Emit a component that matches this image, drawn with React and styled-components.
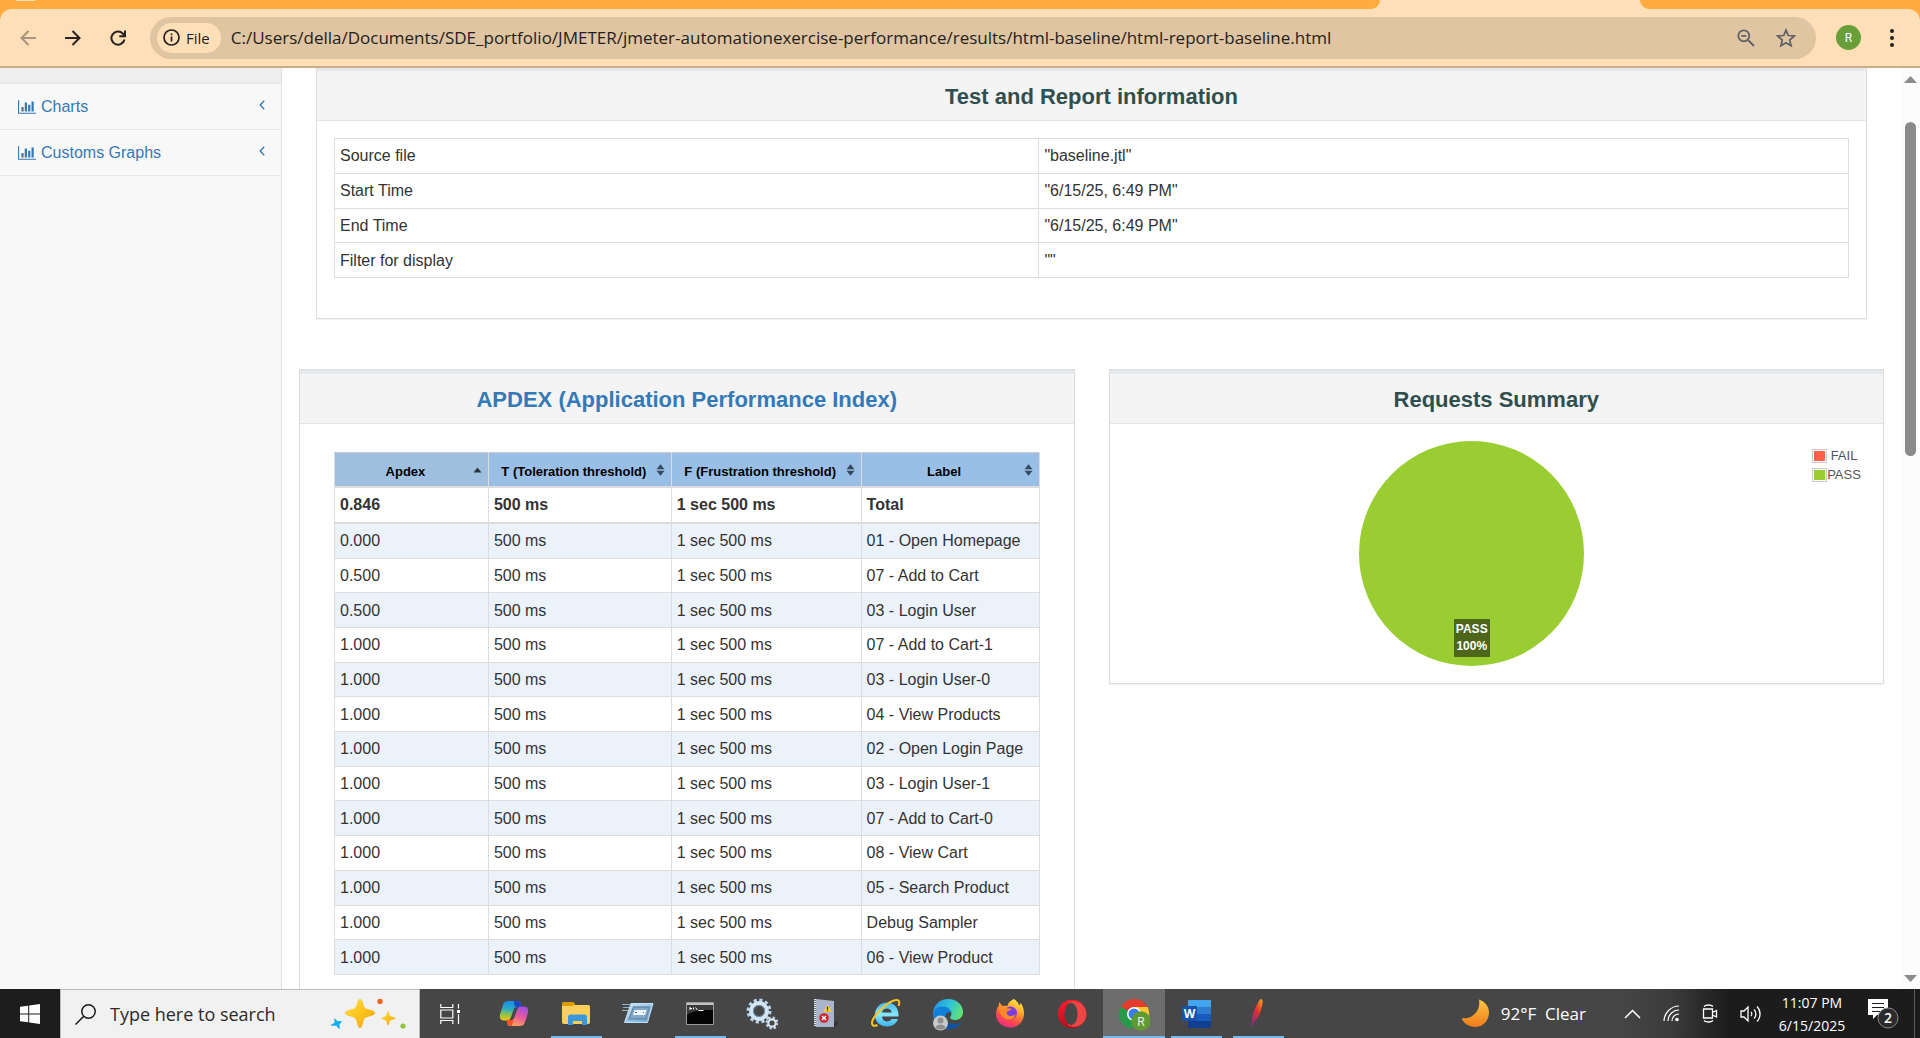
import React from "react";
import styled, { createGlobalStyle } from "styled-components";

const UI = '"Open Sans", "Noto Sans", sans-serif';
const PAGE = '"Liberation Sans", Arial, sans-serif';

const GlobalStyle = createGlobalStyle`
  *, *::before, *::after { box-sizing: border-box; }
  body { margin: 0; font-family: ${PAGE}; font-size: 16px; color: #333; background: #fff; overflow: hidden; }
  button, input { font: inherit; color: inherit; border: 0; background: none; padding: 0; margin: 0; }
  svg { display: block; flex: none; }
  a { color: #337ab7; text-decoration: none; }
  h1, h2, p, ul { margin: 0; padding: 0; }
`;

const Desktop = styled.div`
  height: 100vh;
  display: flex;
  flex-direction: column;
`;

/* ---------- browser frame ---------- */

const Browser = styled.header`
  flex: none;
  background: #ffab40;
  border-bottom: 2px solid #c9ae8a;
`;

const TabStrip = styled.div`
  height: 9px;
  display: flex;
  background: #ffdfb8;
`;

const TabGap = styled.div`
  background: #ffab40;
  flex: ${(p) => p.$grow} 1 0;
  border-radius: ${(p) => (p.$side === "left" ? "0 0 12px 0" : "0 0 0 12px")};
`;

const TabSearch = styled.div`
  width: 19px;
  height: 1px;
  margin-left: 16px;
  background: #ffdfb8;
`;

const ActiveTab = styled.div`
  flex: 260 1 0;
`;

const Toolbar = styled.div`
  height: 57px;
  display: flex;
  align-items: center;
  padding: 0 16px 0 5px;
  background: #ffdfb8;
  border-radius: 12px 12px 0 0;
`;

const ToolButton = styled.button`
  width: 45px;
  height: 42px;
  display: grid;
  place-items: center;
  color: ${(p) => (p.$dim ? "#a8957d" : "#262320")};
`;

const AddressBar = styled.div`
  flex: 1;
  height: 42px;
  display: flex;
  align-items: center;
  margin: 0 12px 0 10px;
  padding: 0 10px 0 7px;
  border-radius: 21px;
  background: #dfc5a2;
`;

const SiteChip = styled.button`
  height: 30px;
  display: flex;
  align-items: center;
  gap: 6px;
  padding: 0 11px 0 6px;
  margin-right: 10px;
  border-radius: 15px;
  background: #ffdfb8;
  font: 500 15px ${UI};
  color: #24211d;
`;

const UrlInput = styled.input`
  flex: 1;
  min-width: 0;
  font: 17px ${UI};
  color: #24211d;
  outline: 0;
`;

const BarButton = styled.button`
  width: 40px;
  height: 36px;
  display: grid;
  place-items: center;
  color: #5f6065;
`;

const Avatar = styled.button`
  width: 25px;
  height: 25px;
  margin: 0 11px 0 8px;
  border-radius: 50%;
  background: #689f38;
  color: #fff;
  font: 12px Roboto, sans-serif;
`;

const MenuButton = styled.button`
  width: 40px;
  height: 36px;
  margin-right: -8px;
  display: grid;
  place-items: center;
`;

/* ---------- report page ---------- */

const Viewport = styled.div`
  flex: 1;
  min-height: 0;
  display: flex;
  overflow: hidden;
`;

const Sidebar = styled.nav`
  width: 282px;
  flex: none;
  padding-top: 15px;
  background: linear-gradient(#eee 15px, #f8f8f8 15px);
  border-right: 1px solid #e0e0e0;
`;

const MenuList = styled.ul`
  list-style: none;
  border-top: 1px solid #e7e7e7;
`;

const MenuLink = styled.a`
  height: 46px;
  display: flex;
  align-items: center;
  gap: 5px;
  padding: 0 16px 0 18px;
  border-bottom: 1px solid #e7e7e7;
`;

const MenuLabel = styled.span`
  flex: 1;
`;

const Main = styled.main`
  flex: 1;
  min-width: 0;
  padding: 0 17px;
  margin-top: -2px;
`;

const Columns = styled.div`
  display: grid;
  grid-template-columns: 1fr 1fr;
  gap: 34px;
  align-items: start;
`;

const Panel = styled.section`
  border: 1px solid #ddd;
  box-shadow: 0 1px 1px rgba(0, 0, 0, 0.05);
  background: #fff;
`;

const TopPanel = styled(Panel)`
  margin: 0 17px 50px;
`;

const PanelHeading = styled.div`
  height: 54px;
  display: flex;
  align-items: center;
  justify-content: center;
  padding-top: 2px;
  border-top: 4px solid #e6e9ec;
  border-bottom: 1px solid #e4e6e6;
  background: #f4f4f4;
`;

const PanelTitle = styled.h2`
  font-size: 22px;
  line-height: 24px;
  font-weight: 700;
  color: #2f4f4f;
`;

const InfoBody = styled.div`
  padding: 17px 17px 40px;
`;

const ApdexBody = styled.div`
  padding: 28px 34px 34px;
`;

const Table = styled.table`
  width: 100%;
  height: ${(p) => p.$height}px;
  table-layout: fixed;
  border-collapse: collapse;
  font-size: 16px;
  line-height: 22px;
`;

const Col = styled.col`
  width: calc(100% * ${(p) => p.$share} / 705);
`;

const Cell = styled.td`
  padding: 5px 5px 4px;
  border: 1px solid #ddd;
  font-weight: ${(p) => (p.$bold ? 700 : 400)};
`;

const Row = styled.tr`
  background: ${(p) => (p.$striped ? "#ebf2fa" : "#fff")};
`;

const TotalRow = styled.tr`
  td { border-top: 2px solid #ddd; border-bottom: 2px solid #ddd; }
`;

const HeadCell = styled.th`
  padding: 0;
  border: 1px solid #ddd;
  border-top-color: #ccc;
  border-bottom: 2px solid #ddd;
  background: ${(p) => (p.$sorted ? "#9fbfdf" : "#99bfe6")};
`;

const SortButton = styled.button`
  width: 100%;
  height: 33px;
  display: flex;
  align-items: center;
  padding: 0 6px 0 3px;
  font: 700 13px ${PAGE};
  color: #000;
`;

const SortLabel = styled.span`
  flex: 1;
  padding-top: 4px;
  text-align: center;
  white-space: nowrap;
`;

const SummaryBody = styled.div`
  display: flex;
  align-items: flex-start;
  padding: 17px 22px;
`;

const PieArea = styled.div`
  flex: 1;
  display: flex;
  justify-content: center;
`;

const Pie = styled.div`
  width: 225px;
  height: 225px;
  display: flex;
  align-items: flex-end;
  justify-content: center;
  padding-bottom: 9px;
  border-radius: 50%;
  background: #9acd32;
`;

const PieLabel = styled.p`
  padding: 2px;
  background: rgba(0, 0, 0, 0.5);
  color: #fff;
  font-size: 12px;
  line-height: 17px;
  font-weight: 700;
  text-align: center;
`;

const Legend = styled.ul`
  width: 49px;
  padding-top: 5px;
  list-style: none;
  font-size: 13px;
  line-height: 19px;
  color: #545454;
`;

const LegendItem = styled.li`
  display: flex;
  align-items: center;
`;

const Swatch = styled.span`
  width: 15px;
  height: 14px;
  flex: none;
  padding: 1px;
  border: 1px solid #ccc;
  background: ${(p) => p.$color} content-box;
`;

const LegendText = styled.span`
  flex: 1;
  text-align: center;
`;

const ScrollTrack = styled.div`
  width: 19px;
  flex: none;
  display: flex;
  flex-direction: column;
  align-items: center;
  padding: 8px 0 7px;
  background: #fcfcfc;
`;

const ScrollThumb = styled.div`
  width: 11px;
  height: 334px;
  margin: 39px 0 auto;
  border-radius: 6px;
  background: #8b8b8b;
`;

/* ---------- taskbar ---------- */

const Taskbar = styled.footer`
  height: 49px;
  flex: none;
  display: flex;
  background: linear-gradient(90deg, #464646 84%, #3c3c3c 87%, #1c1c1c 90%);
  color: #fff;
  font-family: ${UI};
`;

const StartButton = styled.button`
  width: 60px;
  display: grid;
  place-items: center;
  background: #1d1d1d;
`;

const SearchBox = styled.label`
  width: 360px;
  display: flex;
  align-items: center;
  padding: 0 11px 0 14px;
  border: 1px solid #bcbcbc;
  border-bottom: 0;
  background: #f1f1f1;
  color: #1b1b1b;
`;

const SearchInput = styled.input`
  flex: 1;
  min-width: 0;
  margin-left: 14px;
  font: 18px ${UI};
  outline: 0;
  &::placeholder { color: #2b2b2b; opacity: 1; }
`;

const TaskView = styled.button`
  width: 63px;
  padding-left: 20px;
`;

const AppButton = styled.button`
  width: 62px;
  display: flex;
  flex-direction: column;
  align-items: center;
  padding-top: 8px;
  background: ${(p) => (p.$active ? "#6d6d6d" : "transparent")};
  &::after {
    content: "";
    width: ${(p) => (p.$active ? 62 : 51)}px;
    height: 2px;
    margin-top: auto;
    background: ${(p) => (p.$running ? "#76b9ed" : "transparent")};
  }
`;

const Tray = styled.div`
  margin-left: auto;
  display: flex;
  align-items: center;
  font-size: 17px;
`;

const Weather = styled.button`
  display: flex;
  align-items: center;
  gap: 11px;
  margin-right: 38px;
  white-space: pre;
`;

const TrayIcons = styled.div`
  display: flex;
  align-items: center;
  gap: 22px;
`;

const TrayButton = styled.button`
  display: grid;
  place-items: center;
`;

const Clock = styled.button`
  width: 72px;
  margin: 0 20px 0 14px;
  font-size: 14px;
  line-height: 23px;
  white-space: nowrap;
`;

const ShowDesktop = styled.button`
  width: 6px;
  height: 49px;
  margin-left: 15px;
  border-left: 1px solid #5c5c5c;
`;

/* ---------- drawings ---------- */

const Stroke = ({ w = 22, h = w, box = `0 0 ${w} ${h}`, sw = 2, children }) => (
  <svg width={w} height={h} viewBox={box} fill="none" stroke="currentColor" strokeWidth={sw}>
    {children}
  </svg>
);

const BarChart = () => (
  <svg width="18" height="16" viewBox="0 0 2048 1792" fill="#337ab7">
    <path d="M640 896v512H384V896zM1024 384v1024H768V384zM2048 1536v128H0V128h128v1408zM1408 640v768h-256V640zM1792 256v1152h-256V256z" />
  </svg>
);

const AngleLeft = () => (
  <svg width="6" height="14" viewBox="0 0 6 14" fill="none" stroke="#337ab7" strokeWidth="1.4">
    <path d="M5.200.8 1.200 5l4 4.200" />
  </svg>
);

const SortIcon = ({ sorted }) => (
  <svg width="9" height="12" viewBox="0 0 9 12">
    {sorted ? (
      <path d="M.5 8.500 4.500 3.500l4 5z" fill="#26343f" />
    ) : (
      <>
        <path d="M.5 5.200 4.500.2l4 5z" fill="#33485c" />
        <path d="M.5 6.700h8l-4 5z" fill="#33485c" />
      </>
    )}
  </svg>
);

const Windows = () => (
  <svg width="20" height="20" viewBox="0 0 20 20" fill="#fff">
    <path d="M0 2.800 8.200 1.700v7.800H0zM9.200 1.500 20 0v9.500H9.200zM0 10.500h8.200v7.800L0 17.200zM9.200 10.500H20V20L9.200 18.500z" />
  </svg>
);

const Sparkles = () => (
  <svg width="78" height="34" viewBox="0 0 78 34">
    <defs>
      <linearGradient id="gold" x1="0" y1="0" x2="1" y2="1">
        <stop offset="0" stopColor="#ffe04a" />
        <stop offset=".5" stopColor="#fcc41c" />
        <stop offset="1" stopColor="#f0a11c" />
      </linearGradient>
    </defs>
    <path d="M30 2c2 0 2.500 2 3.500 6 .8 2.600 1.600 3.200 4 4 4.500 1.300 7.500 2 7.500 4s-3 2.700-7.500 4c-2.400.8-3.200 1.400-4 4-1 4-1.500 7-3.500 7s-2.500-3-3.500-7c-.8-2.600-1.600-3.200-4-4-4.500-1.300-7.500-2-7.500-4s3-2.700 7.500-4c2.400-.8 3.200-1.400 4-4 1-4 1.500-6 3.500-6z" fill="url(#gold)" />
    <path d="M58 14c1 0 1.300 4.200 2.200 5 .8.900 5.300 1 5.300 2.200s-4.500 1.300-5.300 2.200c-.9.900-1.200 5-2.200 5s-1.300-4.100-2.200-5c-.8-.9-4.300-1-4.300-2.200s3.500-1.300 4.300-2.200c.9-.8 1.200-5 2.200-5z" fill="url(#gold)" />
    <path d="M4.500 21.500c.8-.2 2.500 2.500 3.500 2.700s3-.7 3.500.2-1.800 2.200-2 3 1 4-.2 4.400-2.200-2.800-3.300-3-4.700.5-5-.6 3-1.500 3.500-2.400-.8-4 0-4.300z" fill="#13b1f3" />
    <circle cx="50" cy="4.500" r="2.700" fill="#f26522" />
    <circle cx="73" cy="29" r="2.600" fill="#8cc63e" />
  </svg>
);

const TaskViewIcon = () => (
  <Stroke w={21} h={20} sw={1.2}>
    <path d="M.8 0v3.500h12V0M.8 20v-3.500h12V20M.8 6h12v8h-12zM18.500 0v4.500M18.500 10v10" />
    <path d="M17 6h3v3h-3z" fill="#fff" stroke="none" />
  </Stroke>
);

const App32 = ({ children }) => (
  <svg width="32" height="34" viewBox="0 0 32 34">{children}</svg>
);

const Copilot = () => (
  <App32>
    <defs>
      <linearGradient id="cpA" x1=".4" y1="0" x2=".3" y2="1">
        <stop offset="0" stopColor="#1b8ce8" />
        <stop offset=".4" stopColor="#2aa9c8" />
        <stop offset=".7" stopColor="#8cc44a" />
        <stop offset="1" stopColor="#f5c518" />
      </linearGradient>
      <linearGradient id="cpB" x1=".7" y1="0" x2=".3" y2="1">
        <stop offset="0" stopColor="#a04ee0" />
        <stop offset=".5" stopColor="#ea5a9c" />
        <stop offset="1" stopColor="#ffa45a" />
      </linearGradient>
    </defs>
    <path d="M10 4h10c2 0 2.500 1.500 3 4l.5 2h-4.500c-2 0-3 1-3.700 3.500L13 20c-.8 2.500-2 3.500-4.500 3.500H6c-4 0-5-3-3.500-8L5 8c1-3 2.500-4 5-4z" fill="url(#cpA)" />
    <path d="M14 4h6c2 0 2.500 1.500 3 4l.5 2H19c-2 0-3-.8-3-6z" fill="#1a48c9" />
    <path d="M22 29H12c-2 0-2.500-1.500-3-4l-.5-2H13c2 0 3-1 3.700-3.500L19 13c.8-2.500 2-3.500 4.500-3.500H26c4 0 5 3 3.500 8L27 25c-1 3-2.500 4-5 4z" fill="url(#cpB)" />
    <path d="M8.500 23H13c1.500 0 2.500-.5 3.200-1.800L14 28.500c-.5.500-1.500.5-2 .5-2 0-2.500-1.500-3-4z" fill="#f4512c" />
  </App32>
);

const Folder = () => (
  <App32>
    <path d="M2 7c0-1 .6-2 2-2h9l2 3h13c1 0 2 .6 2 2v15c0 1.500-.8 2-2 2H4c-1.400 0-2-.7-2-2z" fill="#fbcf5b" />
    <path d="M2 9V6.500C2 5.500 2.600 5 4 5h9l2 2-2 2z" fill="#e19a07" />
    <path d="M8 28V20c0-1.500 1-2.500 2.500-2.500h14c1.500 0 2.500 1 2.500 2.500v8h-5v-4h-9v4z" fill="#3c96dc" />
  </App32>
);

const Run = () => (
  <App32>
    <defs>
      <linearGradient id="runA" x1="0" y1="0" x2="1" y2="1">
        <stop offset="0" stopColor="#d6ebf9" />
        <stop offset="1" stopColor="#5fa6da" />
      </linearGradient>
    </defs>
    <path d="M0 7.500h8M1 10.500h6M0 13.500h6" stroke="#8fb2cc" />
    <path d="M9 6.500h22L25.500 25.500H2.500z" fill="url(#runA)" stroke="#c4e0f3" />
    <path d="M11.500 10h16l-3.500 12H7z" fill="#7fa9c9" stroke="#6b8ca5" strokeWidth="1.500" />
    <path d="M12.500 13h12l-1.500 5H11z" fill="#f4f8fb" />
    <path d="M13 15.500h2M21 15.500h1" stroke="#3973a5" />
  </App32>
);

const Terminal = () => (
  <App32>
    <path d="M2.500 5.500h27v22h-27z" fill="#050505" stroke="#9a9a9a" />
    <path d="M3 6h26v2H3z" fill="#bfc4c8" />
    <path d="M3 8h26v5C16 13 7 14 3 18z" fill="#3b3b3b" />
    <path d="M6 11.500h2M6 10v3M9.500 10.500v2M11.500 10.500l2 2.500M14.500 13.500h5" stroke="#fff" />
  </App32>
);

const Gears = () => (
  <App32>
    <circle cx="13" cy="14" r="11" fill="none" stroke="#b9d3ea" strokeWidth="3" strokeDasharray="3.2 2.560" />
    <circle cx="13" cy="14" r="8" fill="none" stroke="#d4e5f4" strokeWidth="4" />
    <circle cx="13" cy="14" r="5.500" fill="none" stroke="#6d93b8" />
    <circle cx="26" cy="26" r="5.500" fill="none" stroke="#c9dced" strokeWidth="2" strokeDasharray="2.300 2.020" />
    <circle cx="26" cy="26" r="3.700" fill="none" stroke="#d4e5f4" strokeWidth="2.200" />
  </App32>
);

const ErrorBook = () => (
  <App32>
    <path d="M25 28l5-6v4l-4 5z" fill="#333" />
    <path d="M6 2h3v27H6z" fill="#dfe3ea" />
    <path d="M8 2l18 2v26H8z" fill="#aab5cc" />
    <path d="M7 3v25" stroke="#6c7688" strokeDasharray="1 1" strokeWidth="2" />
    <path d="M19.500 7l4 8h-8z" fill="#fbd21c" />
    <path d="M19.500 9.500v3M19.500 13.200v1" stroke="#222" strokeWidth="1.200" />
    <circle cx="16" cy="21" r="4.800" fill="#d1242d" />
    <path d="M14 19l4 4M18 19l-4 4" stroke="#fff" strokeWidth="1.500" />
  </App32>
);

const Explorer = () => (
  <App32>
    <defs>
      <linearGradient id="ieA" x1="0" y1="0" x2="0" y2="1">
        <stop offset="0" stopColor="#45b9ee" />
        <stop offset=".5" stopColor="#86e6fd" />
        <stop offset="1" stopColor="#3fb4ec" />
      </linearGradient>
    </defs>
    <path d="M28.500 19.500H12c.3 3 2.300 5 5.200 5 2.200 0 3.600-.9 4.400-2.500H28c-1.500 4.500-5.500 7.500-11 7.500-7 0-12-4.500-12-11.500S10 5.500 17 5.500c7.300 0 12 5.500 11.500 14zm-6.800-4.100c-.4-2.600-2.200-4-4.900-4-2.500 0-4.300 1.500-4.800 4z" fill="url(#ieA)" />
    <path d="M28.500 9c1.500-4 .8-6.500-2.500-6C19 4 6 15 2.500 23.500c-1.500 4.500.5 6.500 5 4.500" fill="none" stroke="#f7c325" strokeWidth="2" />
  </App32>
);

const Edge = () => (
  <App32>
    <defs>
      <linearGradient id="edA" x1="0" y1=".3" x2="1" y2=".6">
        <stop offset="0" stopColor="#2196e0" />
        <stop offset=".5" stopColor="#30c3d9" />
        <stop offset="1" stopColor="#63e36f" />
      </linearGradient>
    </defs>
    <path d="M1 17C1 8 8 2 16 2c9 0 15 6 15 13 0 5-3.500 8-8 8-3 0-5-1-5-2.500 0-1 1.500-1.500 1.500-4 0-3-3-5-7-5-5 0-10 2.500-11.500 5.500z" fill="url(#edA)" />
    <path d="M1 17c0-5 5-8 10.500-7.500 4 .3 7 2.500 7.500 6-3.500-1-6.500 1.500-5.500 6 1 4.500 5.500 7 11.500 5.500l4-1.500C26 30 21 32 17 32 8 32 1 26 1 17z" fill="#1180d8" />
    <path d="M13.500 21.500c1 4.500 5.500 7 11.500 5.500l4-1.500C26 30 21 32 17 32c-5-1-6-6-3.500-10.500z" fill="#10519f" />
    <circle cx="8.500" cy="26" r="7.500" fill="#c9c9c9" />
    <circle cx="8.500" cy="23.500" r="3" fill="#8f8f8f" />
    <path d="M3.500 30.500c1-4 9-4 10 0-2.500 2.800-7.500 2.800-10 0z" fill="#8f8f8f" />
  </App32>
);

const Firefox = () => (
  <App32>
    <defs>
      <linearGradient id="ffA" x1=".8" y1="0" x2=".3" y2="1">
        <stop offset="0" stopColor="#fff14f" />
        <stop offset=".4" stopColor="#ff9d28" />
        <stop offset=".7" stopColor="#ff4a4a" />
        <stop offset="1" stopColor="#e92a86" />
      </linearGradient>
    </defs>
    <path d="M20 2c3 2 4.500 4 5 6.500 1-.5 1.500-1.500 1.500-3 2.500 3.500 3.500 7.500 3.500 11C30 24.500 24 30.500 16 30.500S2 24.500 2 17c0-3.500 1-6.500 3-9V5l3.500 4c2-.5 4-.5 5 0 .3-3 3-5.500 6.500-7z" fill="url(#ffA)" />
    <circle cx="16.500" cy="16" r="6.500" fill="#7a3ee0" />
    <path d="M4.500 11.500c3-3 7-2 9 0h4c-.5 2-3 2.500-4.500 3-1 2 .5 4.500 3.500 4.500 2 0 4-1 5-2-1 5-4.500 6-7.500 5.500-5-.7-8-5-9.500-11z" fill="#ff8a2a" />
  </App32>
);

const Opera = () => (
  <App32>
    <defs>
      <linearGradient id="opA" x1="0" y1="0" x2="0" y2="1">
        <stop offset="0" stopColor="#ff1b2d" />
        <stop offset="1" stopColor="#b3101c" />
      </linearGradient>
    </defs>
    <circle cx="16" cy="17" r="14.300" fill="url(#opA)" />
    <path d="M12 6c8-5 18 1 18.300 11S20 33 12 28z" fill="#f04545" />
    <ellipse cx="15" cy="17" rx="6.500" ry="11.200" fill="#464646" />
  </App32>
);

const Chrome = () => (
  <App32>
    <path d="M16 17 3 10A15 15 0 0 1 29.500 10z" fill="#e33b2e" />
    <path d="M16 17h-1L3 10a15 15 0 0 0 11 22z" fill="#269c48" />
    <path d="M16 10h13.500A15 15 0 0 1 18 32l4-12z" fill="#fcc934" />
    <circle cx="16" cy="17" r="7" fill="#fff" />
    <circle cx="16" cy="17" r="5.500" fill="#3b7ded" />
    <circle cx="23" cy="24" r="9.700" fill="#5f9a33" />
    <text x="23" y="28.500" textAnchor="middle" fontFamily="Roboto, sans-serif" fontSize="12" fill="#e9f3df">R</text>
  </App32>
);

const Word = () => (
  <App32>
    <path d="M8 3h23v7H8z" fill="#41a5ee" />
    <path d="M8 10h23v7H8z" fill="#2b7cd3" />
    <path d="M8 17h23v7H8z" fill="#185abd" />
    <path d="M8 24h23v7H8z" fill="#103f91" />
    <rect x="2" y="9" width="15" height="15" rx="1" fill="#1651aa" />
    <text x="9.500" y="21" textAnchor="middle" fontFamily="Open Sans, sans-serif" fontWeight="700" fontSize="12" fill="#fff">W</text>
  </App32>
);

const Feather = () => (
  <App32>
    <defs>
      <linearGradient id="feA" x1=".8" y1="0" x2=".2" y2="1">
        <stop offset="0" stopColor="#f7941e" />
        <stop offset=".4" stopColor="#e0332f" />
        <stop offset="1" stopColor="#7f2a8c" />
      </linearGradient>
    </defs>
    <path d="M19 2c2.500.5 1.500 5 .5 9-1 5-3 9.500-6.500 13l-4 6-.8-.3L10 23c-.5-6 3-12 6-17 1-2 2-4 3-4z" fill="url(#feA)" />
  </App32>
);

const Moon = () => (
  <svg width="29" height="30" viewBox="0 0 29 30">
    <defs>
      <linearGradient id="moon" x1="0" y1="0" x2="0" y2="1">
        <stop offset="0" stopColor="#fcc73f" />
        <stop offset="1" stopColor="#f07a1c" />
      </linearGradient>
    </defs>
    <path d="M18 .5c6 2 10 7 10 13 0 8-6 14.500-14 14.500C8 28 2.500 24.500.5 19c3 .8 8 .5 12-3 5-4 6.500-10 5.500-15.500z" fill="url(#moon)" />
  </svg>
);

const Wifi = () => (
  <Stroke w={17} h={17} sw={1.2}>
    <path d="M1 16C1 8 8 1 16 1M5 16C5 10 10 5 16 5M9 16c0-4 3-7 7-7" />
    <circle cx="14" cy="14.500" r="1.800" fill="#fff" stroke="none" />
  </Stroke>
);

const Camera = () => (
  <Stroke w={16} h={19} sw={1.300}>
    <path d="M1.500 5h9v9h-9zM10.500 8.500l4-2v6.500l-4-2M2 2.500C4 .5 9 .5 11 2.500M2 16.500c2 2 7 2 9 0" />
  </Stroke>
);

const Speaker = () => (
  <Stroke w={22} h={20} sw={1.300}>
    <path d="M1 7h3l4-4v14l-4-4H1zM11 8c1 1 1 3 0 4M14 5.500c2.500 2.500 2.500 6.500 0 9M17 2.500c4 4 4 11 0 15" />
  </Stroke>
);

const Notifications = () => (
  <svg width="31" height="31" viewBox="0 0 31 31">
    <path d="M0 1h20v16H9l-4 4v-4H0z" fill="#fff" />
    <path d="M4 5.500h12M4 9.500h12M4 13.500h8" stroke="#1c1c1c" />
    <circle cx="20" cy="20" r="10" fill="#2b2b2b" stroke="#8a8a8a" />
    <text x="20" y="25" textAnchor="middle" fontFamily="Open Sans, sans-serif" fontWeight="600" fontSize="14" fill="#fff">2</text>
  </svg>
);

/* ---------- data ---------- */

const info = [
  ["Source file", '"baseline.jtl"'],
  ["Start Time", '"6/15/25, 6:49 PM"'],
  ["End Time", '"6/15/25, 6:49 PM"'],
  ["Filter for display", '""'],
];

const infoShares = [328, 377];

const apdexHeads = ["Apdex", "T (Toleration threshold)", "F (Frustration threshold)", "Label"];
const apdexShares = [154, 183, 190, 178];

const apdexRows = [
  ["0.000", "01 - Open Homepage"],
  ["0.500", "07 - Add to Cart"],
  ["0.500", "03 - Login User"],
  ["1.000", "07 - Add to Cart-1"],
  ["1.000", "03 - Login User-0"],
  ["1.000", "04 - View Products"],
  ["1.000", "02 - Open Login Page"],
  ["1.000", "03 - Login User-1"],
  ["1.000", "07 - Add to Cart-0"],
  ["1.000", "08 - View Cart"],
  ["1.000", "05 - Search Product"],
  ["1.000", "Debug Sampler"],
  ["1.000", "06 - View Product"],
];

const apps = [
  { name: "Copilot", Icon: Copilot },
  { name: "File Explorer", Icon: Folder, running: true },
  { name: "Run", Icon: Run },
  { name: "Command Prompt", Icon: Terminal, running: true },
  { name: "Services", Icon: Gears },
  { name: "Event Log", Icon: ErrorBook },
  { name: "Internet Explorer", Icon: Explorer },
  { name: "Edge", Icon: Edge },
  { name: "Firefox", Icon: Firefox },
  { name: "Opera", Icon: Opera },
  { name: "Chrome", Icon: Chrome, running: true, active: true },
  { name: "Word", Icon: Word, running: true },
  { name: "JMeter", Icon: Feather, running: true },
];

export default function App() {
  return (
    <Desktop>
      <GlobalStyle />
      <Browser>
        <TabStrip>
          <TabGap $grow={1380} $side="left"><TabSearch /></TabGap>
          <ActiveTab />
          <TabGap $grow={280} $side="right" />
        </TabStrip>
        <Toolbar>
          <ToolButton $dim aria-label="Back">
            <Stroke w={16}><path d="M16 8H2M8.500 1 1.500 8l7 7" /></Stroke>
          </ToolButton>
          <ToolButton aria-label="Forward">
            <Stroke w={16}><path d="M0 8h14M7.500 1l7 7-7 7" /></Stroke>
          </ToolButton>
          <ToolButton aria-label="Reload">
            <Stroke w={16}><path d="M14.500 9.500A6.600 6.600 0 1 1 12.800 3.500L15 6M15 .5V6.200H9.300" /></Stroke>
          </ToolButton>
          <AddressBar>
            <SiteChip>
              <Stroke w={17} sw={1.700}>
                <circle cx="8.500" cy="8.500" r="7.500" />
                <path d="M8.500 7.500v5M8.500 4.500v1.700" />
              </Stroke>
              File
            </SiteChip>
            <UrlInput
              aria-label="Address"
              defaultValue="C:/Users/della/Documents/SDE_portfolio/JMETER/jmeter-automationexercise-performance/results/html-baseline/html-report-baseline.html"
            />
            <BarButton aria-label="Zoom">
              <Stroke w={18} sw={1.800}>
                <circle cx="6.800" cy="6.800" r="5.500" />
                <path d="M11 11l6 6M4.300 6.800h5" />
              </Stroke>
            </BarButton>
            <BarButton aria-label="Bookmark this page">
              <Stroke w={20} sw={1.700}>
                <path d="M10 2l2.300 5.500 6 .5-4.600 4 1.400 5.800L10 14.700l-5.100 3.100L6.300 12 1.700 8l6-.5z" />
              </Stroke>
            </BarButton>
          </AddressBar>
          <Avatar aria-label="Profile">R</Avatar>
          <MenuButton aria-label="Menu">
            <svg width="4" height="20" viewBox="0 0 4 20" fill="#24211d">
              <circle cx="2" cy="3" r="2" /><circle cx="2" cy="10" r="2" /><circle cx="2" cy="17" r="2" />
            </svg>
          </MenuButton>
        </Toolbar>
      </Browser>

      <Viewport>
        <Sidebar>
          <MenuList>
            {["Charts", "Customs Graphs"].map((label) => (
              <li key={label}>
                <MenuLink href="#">
                  <BarChart />
                  <MenuLabel>{label}</MenuLabel>
                  <AngleLeft />
                </MenuLink>
              </li>
            ))}
          </MenuList>
        </Sidebar>

        <Main>
          <TopPanel>
            <PanelHeading><PanelTitle>Test and Report information</PanelTitle></PanelHeading>
            <InfoBody>
              <Table $height={140}>
                <colgroup>{infoShares.map((s) => <Col key={s} $share={s} />)}</colgroup>
                <tbody>
                  {info.map(([key, value]) => (
                    <tr key={key}><Cell>{key}</Cell><Cell>{value}</Cell></tr>
                  ))}
                </tbody>
              </Table>
            </InfoBody>
          </TopPanel>

          <Columns>
            <Panel>
              <PanelHeading>
                <PanelTitle><a href="#">APDEX (Application Performance Index)</a></PanelTitle>
              </PanelHeading>
              <ApdexBody>
                <Table $height={523}>
                  <colgroup>{apdexShares.map((s) => <Col key={s} $share={s} />)}</colgroup>
                  <thead>
                    <tr>
                      {apdexHeads.map((head, i) => (
                        <HeadCell key={head} $sorted={i === 0}>
                          <SortButton><SortLabel>{head}</SortLabel><SortIcon sorted={i === 0} /></SortButton>
                        </HeadCell>
                      ))}
                    </tr>
                  </thead>
                  <tbody>
                    <TotalRow>
                      {["0.846", "500 ms", "1 sec 500 ms", "Total"].map((v) => <Cell key={v} $bold>{v}</Cell>)}
                    </TotalRow>
                    {apdexRows.map(([score, label], i) => (
                      <Row key={label} $striped={i % 2 === 0}>
                        <Cell>{score}</Cell>
                        <Cell>500 ms</Cell>
                        <Cell>1 sec 500 ms</Cell>
                        <Cell>{label}</Cell>
                      </Row>
                    ))}
                  </tbody>
                </Table>
              </ApdexBody>
            </Panel>

            <Panel>
              <PanelHeading><PanelTitle>Requests Summary</PanelTitle></PanelHeading>
              <SummaryBody>
                <PieArea>
                  <Pie><PieLabel>PASS<br />100%</PieLabel></Pie>
                </PieArea>
                <Legend>
                  <LegendItem><Swatch $color="#ff6347" /><LegendText>FAIL</LegendText></LegendItem>
                  <LegendItem><Swatch $color="#9acd32" /><LegendText>PASS</LegendText></LegendItem>
                </Legend>
              </SummaryBody>
            </Panel>
          </Columns>
        </Main>

        <ScrollTrack>
          <svg width="13" height="7" viewBox="0 0 13 7" fill="#8b8b8b"><path d="M0 7 6.500 0 13 7z" /></svg>
          <ScrollThumb />
          <svg width="13" height="7" viewBox="0 0 13 7" fill="#8b8b8b"><path d="M0 0 6.500 7 13 0z" /></svg>
        </ScrollTrack>
      </Viewport>

      <Taskbar>
        <StartButton aria-label="Start"><Windows /></StartButton>
        <SearchBox>
          <Stroke w={21} sw={1.500}>
            <circle cx="13.500" cy="7.500" r="6.700" />
            <path d="M8.800 12.200.5 20.500" />
          </Stroke>
          <SearchInput aria-label="Search" placeholder="Type here to search" />
          <Sparkles />
        </SearchBox>
        <TaskView aria-label="Task view"><TaskViewIcon /></TaskView>
        {apps.map(({ name, Icon, running, active }) => (
          <AppButton key={name} aria-label={name} $running={running} $active={active}><Icon /></AppButton>
        ))}
        <Tray>
          <Weather><Moon /><span>92°F  Clear</span></Weather>
          <TrayIcons>
            <TrayButton aria-label="Show hidden icons">
              <Stroke w={17} h={10} sw={1.500}><path d="M1 9l7.500-7.500L16 9" /></Stroke>
            </TrayButton>
            <TrayButton aria-label="Network"><Wifi /></TrayButton>
            <TrayButton aria-label="Meet now"><Camera /></TrayButton>
            <TrayButton aria-label="Volume"><Speaker /></TrayButton>
          </TrayIcons>
          <Clock>11:07 PM<br />6/15/2025</Clock>
          <TrayButton aria-label="Notifications"><Notifications /></TrayButton>
          <ShowDesktop aria-label="Show desktop" />
        </Tray>
      </Taskbar>
    </Desktop>
  );
}
